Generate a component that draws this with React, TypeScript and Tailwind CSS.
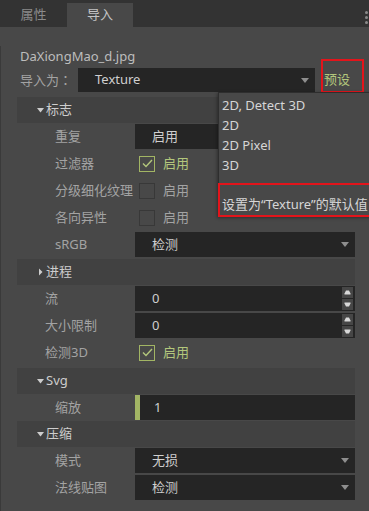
import type { ReactNode } from 'react'

const font = { fontFamily: '"Noto Sans", "Noto Sans CJK SC", sans-serif' }

function Arrow() {
  return (
    <svg width="8" height="5" viewBox="0 0 8 5" className="shrink-0">
      <path d="M0 0H8L4 5Z" fill="#8e8e8e" />
    </svg>
  )
}

function Header({ open, title, className = '' }: { open: boolean; title: string; className?: string }) {
  return (
    <div className={`h-[26px] bg-[#414141] flex items-center pl-[20px] text-[#cdcdcd] ${className}`}>
      {open ? (
        <svg width="8" height="5" viewBox="0 0 8 5" className="mr-[1px]">
          <path d="M0 0H7L3.5 4.5Z" fill="#cdcdcd" />
        </svg>
      ) : (
        <svg width="8" height="8" viewBox="0 0 8 8" className="mr-[1px]">
          <path d="M2 0.5V7.5L5.5 4Z" fill="#cdcdcd" />
        </svg>
      )}
      <span>{title}</span>
    </div>
  )
}

function Row({ label, indent = 38, children }: { label: string; indent?: number; children: ReactNode }) {
  return (
    <div className="h-[27px] flex items-center">
      <div className={`w-[118px] shrink-0 text-[#a3a3a3] ${indent === 38 ? 'pl-[38px]' : 'pl-[28px]'}`}>{label}</div>
      <div className="flex-1 h-[25px] flex items-center">{children}</div>
    </div>
  )
}

function Select({ value }: { value: string }) {
  return (
    <div className="w-full h-full bg-[#252525] flex items-center justify-between pl-[17px] pr-[6px] text-[#cfcfcf]">
      <span>{value}</span>
      <Arrow />
    </div>
  )
}

function Check({ checked }: { checked: boolean }) {
  return (
    <div className="flex items-center pl-[4px] gap-[8px]">
      <div
        className={`w-[16px] h-[16px] border flex items-center justify-center ${
          checked ? 'border-[#a2b564]' : 'border-[#383838]'
        }`}
      >
        {checked && (
          <svg width="11" height="9" viewBox="0 0 11 9">
            <path d="M1 4.5L4 7.5L10 1" stroke="#b3c77c" strokeWidth="1.4" fill="none" />
          </svg>
        )}
      </div>
      <span className={checked ? 'text-[#b3c77c]' : 'text-[#a3a3a3]'}>启用</span>
    </div>
  )
}

function SpinBtn({ up }: { up: boolean }) {
  return (
    <div className="w-[11px] h-[11px] bg-[#464646] flex items-center justify-center">
      <svg width="7" height="5" viewBox="0 0 7 5">
        {up ? <path d="M2 0.5H5L6.5 3.5V4.5H0.5V3.5Z" fill="#d8d8d8" /> : <path d="M0.5 0.5H6.5V1.5L5 4.5H2L0.5 1.5Z" fill="#d8d8d8" />}
      </svg>
    </div>
  )
}

function NumberInput({ value }: { value: string }) {
  return (
    <div className="w-full h-full bg-[#252525] flex items-center justify-between pl-[17px] pr-[2px] text-[#cfcfcf]">
      <span>{value}</span>
      <div className="flex flex-col gap-[1px]">
        <SpinBtn up />
        <SpinBtn up={false} />
      </div>
    </div>
  )
}

export default function App() {
  return (
    <div className="w-[369px] h-[511px] overflow-hidden relative bg-[#484848] text-[13px]" style={font}>
      {/* tabs */}
      <div className="h-[27px] bg-[#333333] flex items-end relative">
        <div className="w-[67px] h-[24px] flex items-center justify-center text-[#8a8a8a]">属性</div>
        <div className="w-[66px] h-[24px] bg-[#484848] flex items-center justify-center text-[#c4c4c4]">导入</div>
        <div className="absolute right-[1px] top-[11px] flex flex-col gap-[2px]">
          <div className="w-[3px] h-[3px] rounded-full bg-[#8a8a8a]" />
          <div className="w-[3px] h-[3px] rounded-full bg-[#8a8a8a]" />
          <div className="w-[3px] h-[3px] rounded-full bg-[#8a8a8a]" />
        </div>
      </div>

      <div className="border-l border-[#3a3a3a] h-[484px]">
        <div className="mt-[19px] h-[20px] leading-[20px] pl-[19px] text-[#bdbdbd]">DaXiongMao_d.jpg</div>

        <div className="mt-[2px] h-[24px] flex items-center">
          <div className="w-[77px] pl-[19px] text-[#a3a3a3]">
            导入为<span style={{ fontFamily: '"Noto Sans CJK TC", sans-serif' }}>：</span>
          </div>
          <div className="w-[237px] h-full bg-[#252525] flex items-center justify-between pl-[17px] pr-[6px] text-[#cfcfcf]">
            <span>Texture</span>
            <Arrow />
          </div>
          <div className="ml-[9px] text-[#b3c77c]">预设</div>
        </div>

        <div className="ml-[16px] w-[338px]">
          <Header open title="标志" className="mt-[5px]" />
          <Row label="重复">
            <Select value="启用" />
          </Row>
          <Row label="过滤器">
            <Check checked />
          </Row>
          <Row label="分级细化纹理">
            <Check checked={false} />
          </Row>
          <Row label="各向异性">
            <Check checked={false} />
          </Row>
          <Row label="sRGB">
            <Select value="检测" />
          </Row>

          <Header open={false} title="进程" className="mt-[1px]" />
          <Row label="流" indent={28}>
            <NumberInput value="0" />
          </Row>
          <Row label="大小限制" indent={28}>
            <NumberInput value="0" />
          </Row>
          <Row label="检测3D" indent={28}>
            <Check checked />
          </Row>

          <Header open title="Svg" className="mt-[2px]" />
          <Row label="缩放">
            <div className="w-full h-full bg-[#252525] flex items-center text-[#cfcfcf]">
              <div className="w-[5px] h-full bg-[#a2b564]" />
              <span className="pl-[14px]">1</span>
            </div>
          </Row>

          <Header open title="压缩" />
          <Row label="模式">
            <Select value="无损" />
          </Row>
          <Row label="法线贴图">
            <Select value="检测" />
          </Row>
        </div>
      </div>

      {/* annotation around 预设 */}
      <div className="absolute left-[321px] top-[59px] w-[43px] h-[34px] border-2 border-[#e3141b]" />

      {/* dropdown menu */}
      <div className="absolute left-[218px] top-[92px] w-[155px] h-[125px] bg-[#484848] border-l border-t border-[#2e2e2e] shadow-[-1px_1px_3px_rgba(0,0,0,0.35)] text-[#d6d6d6]">
        <div className="pt-[2px] pl-[3px]">
          <div className="h-[20px] leading-[20px]">2D, Detect 3D</div>
          <div className="h-[20px] leading-[20px]">2D</div>
          <div className="h-[20px] leading-[20px]">2D Pixel</div>
          <div className="h-[20px] leading-[20px]">3D</div>
        </div>
        <div className="mt-[8px] h-[34px] border-2 border-[#e3141b] -ml-px flex items-end pb-[1px] pl-[2px] whitespace-nowrap">
          设置为“Texture”的默认值
        </div>
      </div>
    </div>
  )
}
